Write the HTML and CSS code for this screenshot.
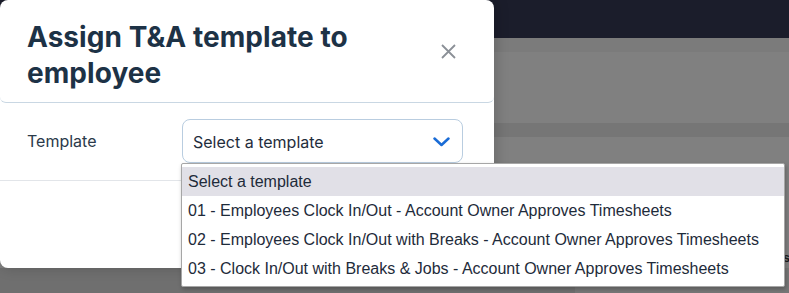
FILE: index.html
```html
<!DOCTYPE html>
<html lang="en">
<head>
<meta charset="utf-8">
<title>Assign T&amp;A template</title>
<link rel="stylesheet" href="styles.css">
</head>
<body>
<div class="page">
  <div class="topbar"></div>
  <div class="band"></div>
  <div class="area area-top"></div>
  <div class="band band-mid"></div>
  <div class="area area-main">
    <span class="peek">Hours</span>
  </div>
  <div class="bottom">
    <div class="bottom-left"></div>
    <div class="bottom-right"></div>
  </div>
</div>

<div class="modal">
  <div class="modal-header">
    <h1 class="modal-title">Assign T&amp;A template to employee</h1>
    <button class="close" aria-label="Close">
      <svg width="15" height="15" viewBox="0 0 15 15"><path d="M1 1L14 14M14 1L1 14" stroke="#8b9097" stroke-width="1.8" fill="none"/></svg>
    </button>
  </div>
  <div class="modal-body">
    <label class="field-label">Template</label>
    <div class="select">
      <span class="select-value">Select a template</span>
      <svg class="chevron" width="17" height="10" viewBox="0 0 17 10"><path d="M1.5 1.5L8.5 8L15.5 1.5" stroke="#1a6cd6" stroke-width="2.5" fill="none" stroke-linecap="round" stroke-linejoin="round"/></svg>
    </div>
  </div>
</div>

<ul class="dropdown">
  <li class="option selected">Select a template</li>
  <li class="option">01 - Employees Clock In/Out - Account Owner Approves Timesheets</li>
  <li class="option">02 - Employees Clock In/Out with Breaks - Account Owner Approves Timesheets</li>
  <li class="option">03 - Clock In/Out with Breaks &amp; Jobs - Account Owner Approves Timesheets</li>
</ul>
</body>
</html>
```
FILE: styles.css
```css
html, body {
  margin: 0;
  padding: 0;
  height: 100%;
  overflow: hidden;
}
body {
  font-family: Inter, "Noto Sans", sans-serif;
  background: #808080;
}
.page {
  display: flex;
  flex-direction: column;
  height: 293px;
}
.topbar {
  height: 38px;
  background: #1b1d2b;
}
.band {
  height: 14px;
  background: #7b7b7b;
}
.band-mid {
  background: #767676;
}
.area-top {
  height: 71px;
  background: #808080;
}
.area-main {
  height: 131px;
  background: #808080;
  display: flex;
  justify-content: flex-end;
  align-items: flex-end;
  padding-bottom: 3px;
  box-sizing: border-box;
}
.peek {
  font-family: "Liberation Sans", Arial, sans-serif;
  font-weight: bold;
  font-size: 12px;
  color: #1c1c1c;
  margin-right: -1px;
}
.bottom {
  flex: 1;
  display: flex;
}
.bottom-left {
  width: 575px;
  background: #6f6f6f;
}
.bottom-right {
  flex: 1;
  background: #777777;
}

.modal {
  position: absolute;
  top: 0;
  left: 0;
  width: 494px;
  height: 268px;
  background: #ffffff;
  border-radius: 8px;
  box-shadow: 2px 0 14px rgba(0, 0, 0, 0.18);
}
.modal-header {
  height: 103px;
  box-sizing: border-box;
  padding: 19px 38px 0 27px;
  display: flex;
  justify-content: space-between;
  align-items: flex-start;
  border-bottom: 1px solid #c9d7e3;
  border-radius: 0 0 6px 6px;
}
.modal-title {
  margin: 0;
  font-size: 28px;
  line-height: 36px;
  font-weight: 700;
  color: #1d3246;
  width: 360px;
  letter-spacing: 0.05px;
}
.close {
  margin-top: 25px;
  padding: 0;
  border: 0;
  background: none;
  width: 15px;
  height: 15px;
  display: flex;
}
.modal-body {
  height: 78px;
  box-sizing: border-box;
  padding: 16px 0 0 27px;
  display: flex;
  align-items: flex-start;
  border-bottom: 1px solid #e2e5e9;
}
.field-label {
  width: 155px;
  font-size: 16px;
  line-height: 44px;
  color: #2b3a4a;
}
.select {
  width: 281px;
  height: 44px;
  box-sizing: border-box;
  border: 1px solid #b9cde0;
  border-radius: 8px;
  padding: 1px 12px 0 10px;
  display: flex;
  align-items: center;
  justify-content: space-between;
}
.select-value {
  font-size: 16px;
  color: #1f2d3c;
}
.chevron {
  display: block;
  margin-top: 0;
}

.dropdown {
  position: absolute;
  left: 181px;
  top: 163px;
  width: 604px;
  box-sizing: border-box;
  margin: 0;
  padding: 3px 0;
  list-style: none;
  background: #ffffff;
  border: 1px solid #a6a6a6;
  border-radius: 2px;
  box-shadow: 1px 2px 4px rgba(0, 0, 0, 0.25);
}
.option {
  height: 29px;
  line-height: 29px;
  padding-left: 6px;
  font-family: "Liberation Sans", Arial, sans-serif;
  font-size: 16px;
  color: #1e2b3a;
  white-space: nowrap;
}
.option.selected {
  background: #e1e0e7;
}
```
